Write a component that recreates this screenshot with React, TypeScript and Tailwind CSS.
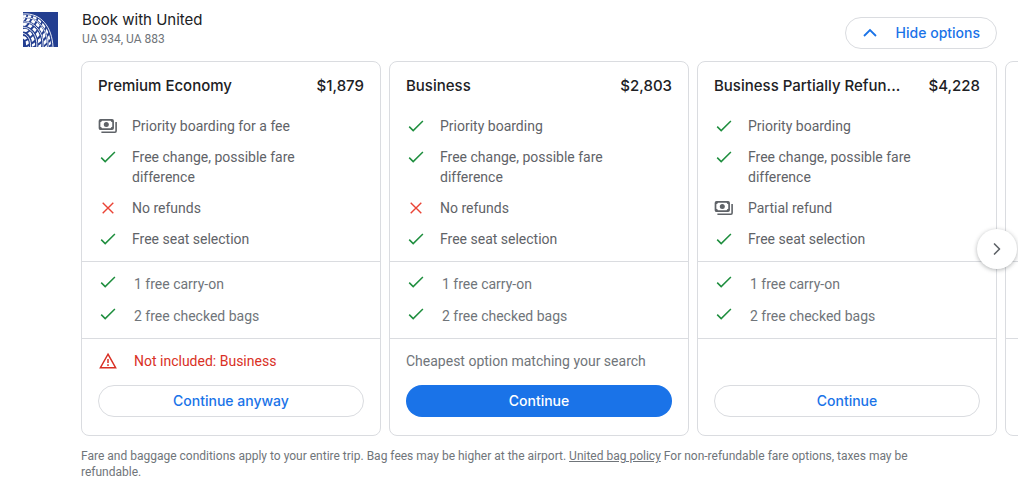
import { ChevronRight } from "lucide-react";

type IconName = "check" | "cross" | "cash";

type Fare = {
  name: string;
  price: string;
  perks: { icon: IconName; text: string }[];
  bags: string[];
  note?: string;
  warning?: string;
  action: string;
  primary?: boolean;
};

const FARES: Fare[] = [
  {
    name: "Premium Economy",
    price: "$1,879",
    perks: [
      { icon: "cash", text: "Priority boarding for a fee" },
      { icon: "check", text: "Free change, possible fare difference" },
      { icon: "cross", text: "No refunds" },
      { icon: "check", text: "Free seat selection" },
    ],
    bags: ["1 free carry-on", "2 free checked bags"],
    warning: "Not included: Business",
    action: "Continue anyway",
  },
  {
    name: "Business",
    price: "$2,803",
    perks: [
      { icon: "check", text: "Priority boarding" },
      { icon: "check", text: "Free change, possible fare difference" },
      { icon: "cross", text: "No refunds" },
      { icon: "check", text: "Free seat selection" },
    ],
    bags: ["1 free carry-on", "2 free checked bags"],
    note: "Cheapest option matching your search",
    action: "Continue",
    primary: true,
  },
  {
    name: "Business Partially Refun...",
    price: "$4,228",
    perks: [
      { icon: "check", text: "Priority boarding" },
      { icon: "check", text: "Free change, possible fare difference" },
      { icon: "cash", text: "Partial refund" },
      { icon: "check", text: "Free seat selection" },
    ],
    bags: ["1 free carry-on", "2 free checked bags"],
    action: "Continue",
  },
];

function CheckIcon() {
  return (
    <svg viewBox="0 0 20 20" className="size-5 shrink-0" aria-hidden="true">
      <path d="M3.2 10.6 7.2 14.6 16.9 5" fill="none" stroke="#1e8e3e" strokeWidth="1.5" />
    </svg>
  );
}

function CrossIcon() {
  return (
    <svg viewBox="0 0 20 20" className="size-5 shrink-0" aria-hidden="true">
      <path d="M4.7 4.7 15.3 15.3M15.3 4.7 4.7 15.3" fill="none" stroke="#ea4335" strokeWidth="1.4" />
    </svg>
  );
}

function CashIcon() {
  return (
    <svg viewBox="0 0 20 20" className="size-5 shrink-0" aria-hidden="true">
      <rect x="1.5" y="3.9" width="13.6" height="9.2" rx="1" fill="none" stroke="#5f6368" strokeWidth="1.7" />
      <path
        d="M1.5 4h2.6a2.4 2.4 0 0 1-2.6 2.2zM15.1 4h-2.6a2.4 2.4 0 0 0 2.6 2.2zM1.5 13h2.6a2.4 2.4 0 0 0-2.6-2.2zM15.1 13h-2.6a2.4 2.4 0 0 1 2.6-2.2z"
        fill="#5f6368"
      />
      <circle cx="8.3" cy="8.5" r="2.5" fill="#5f6368" />
      <path d="M3.4 16.2H17a1.1 1.1 0 0 0 1.1-1.1V6" fill="none" stroke="#5f6368" strokeWidth="1.6" />
    </svg>
  );
}

function WarningIcon() {
  return (
    <svg viewBox="0 0 20 20" className="size-5 shrink-0" aria-hidden="true">
      <path d="M10 3.2 17.6 16.7H2.4z" fill="none" stroke="#d93025" strokeWidth="1.5" />
      <path d="M10 8v4M10 13.2v1.7" fill="none" stroke="#d93025" strokeWidth="1.5" />
    </svg>
  );
}

function CollapseIcon() {
  return (
    <svg viewBox="0 0 18 18" className="size-[18px] shrink-0" aria-hidden="true">
      <path d="M2 12 8 6 14 12" fill="none" stroke="#1a73e8" strokeWidth="1.8" />
    </svg>
  );
}

function UnitedLogo() {
  return (
    <svg viewBox="0 0 35 35" className="size-[35px] shrink-0" role="img" aria-label="United">
      <rect width="35" height="35" fill="#233e90" />
      {/* wide meridian bands */}
      <g fill="none" stroke="#fff">
        <path d="M0 4.2C15 2.5 26 14 27.3 35" strokeWidth="2" />
        <path d="M0 7.6C12 6.5 23 17 22.5 35" strokeWidth="2.8" />
        <path d="M0 12.2C9 12 18 21 16.6 35" strokeWidth="3" />
        <path d="M0 18C6 18 11.5 25 10.4 35" strokeWidth="3" />
        <path d="M0 25C3 26 4.8 30 4.4 35" strokeWidth="2.8" />
      </g>
      {/* parallels cut the bands into blocks */}
      <g fill="none" stroke="#233e90" strokeWidth="1.9">
        <path d="M0 10.5Q4 8 4.5 1" />
        <path d="M0 16.5Q8 12 10 2" />
        <path d="M0 23Q12 17 15.5 4" />
        <path d="M0 30Q15 23 20.5 7" />
        <path d="M2 35Q18 28 25 12" />
        <path d="M9 36Q21 31 28 18" />
        <path d="M16 37Q25 33 30 24" />
        <path d="M23 37Q28 34 31 30" />
      </g>
      <g fill="none" stroke="#fff" strokeWidth="0.9">
        <path d="M0 2C18 .5 29 15 30 35" />
        <path d="M0 5.4C13 4 25 16 25.2 35" />
        <path d="M0 10C10 9 21 19 20 35" />
        <path d="M0 15.2C7 15 15 23 13.8 35" />
        <path d="M0 21.5C4 22 8 27 7.6 35" />
      </g>
    </svg>
  );
}

const ICONS = { check: CheckIcon, cross: CrossIcon, cash: CashIcon };

function FareCard({ fare }: { fare: Fare }) {
  return (
    <article className="flex w-[300px] shrink-0 flex-col rounded-lg border border-[#dadce0]">
      <header className="flex items-center justify-between px-4 pt-3 font-['Inter',sans-serif] text-[15px] leading-6 font-medium text-[#202124]">
        <h3>{fare.name}</h3>
        <span>{fare.price}</span>
      </header>
      <ul className="flex flex-col gap-[11px] px-4 pt-[18px] pb-3 text-[#5f6368]">
        {fare.perks.map((perk) => {
          const Icon = ICONS[perk.icon];
          return (
            <li key={perk.text} className="flex gap-[14px] pr-4">
              <Icon />
              {perk.text}
            </li>
          );
        })}
      </ul>
      <ul className="flex flex-col gap-[10px] border-t border-[#dadce0] px-4 pt-[10px] pb-3 text-[#70757a]">
        {fare.bags.map((bag) => (
          <li key={bag} className="flex items-start gap-4">
            <CheckIcon />
            <span className="pt-0.5">{bag}</span>
          </li>
        ))}
      </ul>
      <div className="flex grow flex-col gap-[14px] border-t border-[#dadce0] px-4 pt-3 pb-[18px]">
        <div className="flex h-5 items-center gap-4 text-[#70757a]">
          {fare.warning && (
            <>
              <WarningIcon />
              <span className="text-[#d93025]">{fare.warning}</span>
            </>
          )}
          {fare.note}
        </div>
        <button
          type="button"
          className={
            fare.primary
              ? "h-8 rounded-full bg-[#1a73e8] font-['Inter',sans-serif] font-medium text-white"
              : "h-8 rounded-full border border-[#dadce0] font-['Inter',sans-serif] font-medium text-[#1a73e8]"
          }
        >
          {fare.action}
        </button>
      </div>
    </article>
  );
}

export default function App() {
  return (
    <main className="overflow-hidden bg-white pb-5 font-['Roboto',sans-serif] text-sm leading-5">
      <header className="flex items-start pt-3 pr-[21px] pl-[23px]">
        <UnitedLogo />
        <div className="ml-6 grow">
          <h2 className="font-['Inter',sans-serif] text-[15px] leading-4 text-[#202124]">Book with United</h2>
          <p className="mt-[3px] text-xs leading-4 text-[#70757a]">UA 934, UA 883</p>
        </div>
        <button
          type="button"
          aria-expanded="true"
          className="mt-[5px] flex h-8 items-center gap-4 rounded-full border border-[#dadce0] px-4 font-['Inter',sans-serif] font-medium text-[#1a73e8]"
        >
          <CollapseIcon />
          Hide options
        </button>
      </header>

      <section aria-label="Fare options" className="relative mt-3 pl-[81px]">
        <div className="flex gap-2 overflow-hidden">
          {FARES.map((fare) => (
            <FareCard key={fare.name} fare={fare} />
          ))}
          {/* next fare, peeking in from the right */}
          <div className="flex w-[300px] shrink-0 flex-col rounded-lg border border-[#dadce0]" aria-hidden="true">
            <div className="h-[199px]" />
            <div className="h-[78px] border-y border-[#dadce0]" />
          </div>
        </div>
        <button
          type="button"
          aria-label="Next fares"
          className="absolute top-1/2 right-px flex size-10 -translate-y-1/2 items-center justify-center rounded-full bg-white text-[#5f6368] shadow-[0_1px_4px_rgba(60,64,67,0.4)]"
        >
          <ChevronRight className="size-5" />
        </button>
      </section>

      <p className="mt-3 pr-16 pl-[81px] text-xs leading-4 text-[#70757a]">
        Fare and baggage conditions apply to your entire trip. Bag fees may be higher at the airport.{" "}
        <a href="#bag-policy" className="underline">
          United bag policy
        </a>{" "}
        For non-refundable fare options, taxes may be refundable.
      </p>
    </main>
  );
}
